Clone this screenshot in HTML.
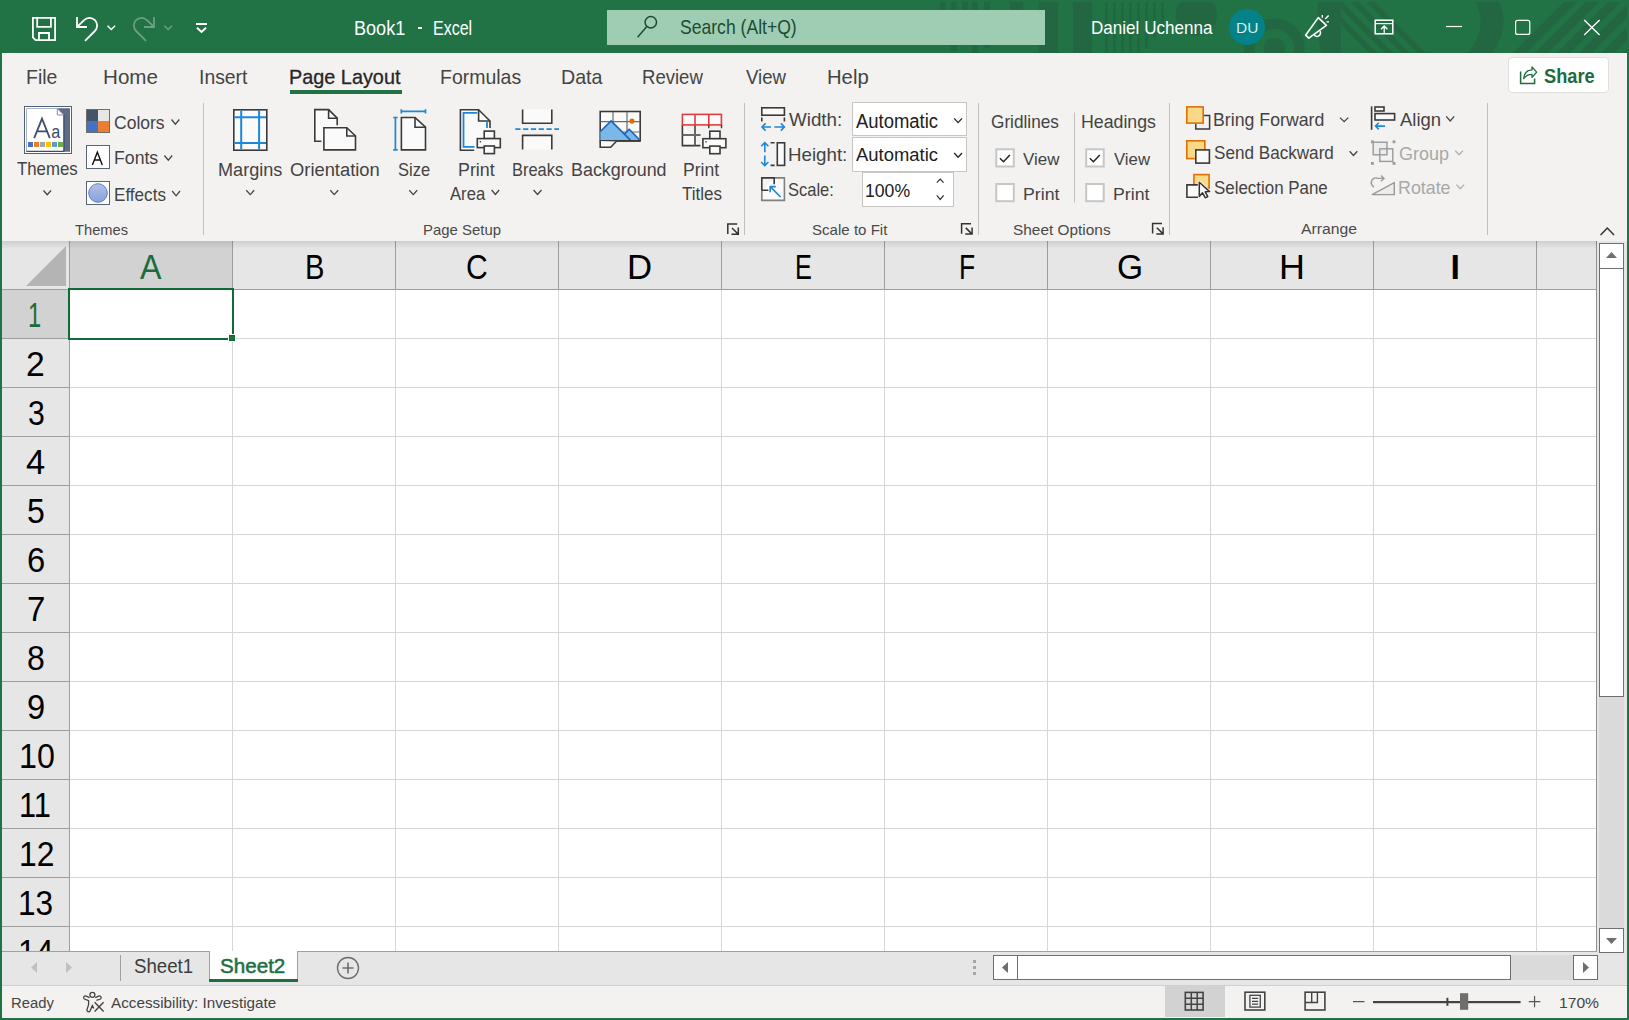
<!DOCTYPE html><html><head><meta charset="utf-8"><style>
html,body{margin:0;padding:0;width:1629px;height:1020px;overflow:hidden;background:#217346}
.t{position:absolute;white-space:pre;font-family:"Liberation Sans",sans-serif;transform-origin:0 0}
.r{position:absolute;box-sizing:content-box}
svg.r{overflow:visible}
</style></head><body>
<div class="r" style="left:0px;top:0px;width:1629px;height:1020px;background:#217346;"></div>
<div class="r" style="left:2px;top:53px;width:1625px;height:188px;background:#f3f2f1;"></div>
<svg class="r" style="left:0;top:0" width="1629" height="53"><defs><clipPath id="tc"><rect x="0" y="2" width="1627" height="51"/></clipPath></defs><g clip-path="url(#tc)" fill="#226741"><rect x="940" y="0" width="5.8" height="30"/><rect x="951" y="0" width="6" height="51.6"/><rect x="962" y="0" width="6" height="30"/><rect x="972.2" y="0" width="5.8" height="53"/><rect x="984.1" y="0" width="6.1" height="47.9"/><rect x="1009.6" y="0" width="13.2" height="30"/><rect x="1038.7" y="0" width="19.4" height="53"/><rect x="1073.1" y="0" width="19" height="53"/><rect x="1105" y="0" width="2.9" height="53"/><rect x="1113.1" y="0" width="2.9" height="53"/><rect x="1121" y="0" width="2.9" height="53"/><rect x="1129" y="0" width="2.9" height="53"/><rect x="1137.1" y="0" width="2.9" height="53"/><rect x="1145.2" y="0" width="2.9" height="49"/><rect x="1153" y="0" width="2.9" height="39"/><rect x="1161" y="0" width="2.9" height="32.7"/><circle cx="1196.3" cy="15.2" r="20.7"/><circle cx="1274.3" cy="48.7" r="25.05" fill="none" stroke="#226741" stroke-width="10.5"/><circle cx="1274.3" cy="48.7" r="10.7"/><path d="M1318 2 H1340.8 V53 H1321 Q1316 26 1318 2 Z"/><clipPath id="sc"><rect x="1340.8" y="0" width="200" height="53"/></clipPath><g clip-path="url(#sc)"><polygon points="1316,0 1324.5,0 1377.5,53 1369,53"/><polygon points="1332,0 1340.5,0 1393.5,53 1385,53"/><polygon points="1348.2,0 1356.7,0 1409.7,53 1401.2,53"/><polygon points="1364.4,0 1372.9,0 1425.9,53 1417.4,53"/></g><path d="M1474 0 Q1490 26 1468 53 L1492 53 Q1512 26 1498 0 Z"/><polygon points="1513,53 1526,53 1577,2 1564,2"/><polygon points="1535,53 1548,53 1599,2 1586,2"/><polygon points="1557,53 1570,53 1621,2 1608,2"/><polygon points="1579,53 1592,53 1643,2 1630,2"/><polygon points="1601,53 1614,53 1665,2 1652,2"/><polygon points="1623,53 1636,53 1687,2 1674,2"/></g></svg>
<svg class="r" style="left:0;top:0" width="1629" height="53" fill="none" stroke-linecap="butt"><path d="M32.9 17.9 H55.1 V40.1 H35.6 L32.9 37.4 Z" stroke="#ffffff" stroke-width="1.8"/><path d="M37.2 17.9 V26.8 H50.9 V17.9" stroke="#ffffff" stroke-width="1.8"/><path d="M39 40.1 V33 H49 V40.1" stroke="#ffffff" stroke-width="1.8"/><path d="M77 17 V27 H87 M77.6 26.4 L84.1 20.2 A7.6 7.6 0 0 1 94.9 31 L85 40.8" stroke="#ffffff" stroke-width="1.8"/><path d="M107.5 25.8 L111.3 29.5 L115.1 25.8" stroke="#ffffff" stroke-width="1.5"/><path d="M77 17 V27 H87 M77.6 26.4 L84.1 20.2 A7.6 7.6 0 0 1 94.9 31 L85 40.8" stroke="rgba(255,255,255,0.33)" stroke-width="1.8" transform="translate(231,0) scale(-1,1)"/><path d="M164.4 25.8 L168.2 29.5 L172 25.8" stroke="rgba(255,255,255,0.33)" stroke-width="1.5"/><rect x="196" y="23" width="11" height="2" fill="#ffffff" stroke="none"/><path d="M197 27.8 L201.5 32 L206 27.8" stroke="#ffffff" stroke-width="2"/><path d="M1305.6 35.2 L1318.3 17.6 L1326.4 25.4 L1308.8 38.1 Z" stroke="#ffffff" stroke-width="1.6" stroke-linejoin="round"/><path d="M1314.1 34.7 A3.4 3.4 0 0 0 1320 31.2" stroke="#ffffff" stroke-width="1.5"/><path d="M1322.3 15.1 V17.8 M1325.2 19 L1328.6 15.5 M1326.5 21.9 H1329" stroke="#ffffff" stroke-width="1.4"/><rect x="1375.2" y="20.2" width="17.6" height="13.6" stroke="#ffffff" stroke-width="1.5"/><path d="M1375 23.6 H1393" stroke="#ffffff" stroke-width="1.2"/><path d="M1384.2 34 V26.2 M1381 29.2 L1384.2 26 L1387.4 29.2" stroke="#ffffff" stroke-width="1.3"/><path d="M1446 26.5 H1462" stroke="#ffffff" stroke-width="1.2"/><rect x="1515.6" y="20.4" width="14.2" height="14" rx="2" stroke="#ffffff" stroke-width="1.2"/><path d="M1584.2 20 L1599.6 35 M1599.6 20 L1584.2 35" stroke="#ffffff" stroke-width="1.3"/></svg>
<div class="t" style="left:354.05px;top:18.53px;font-size:19.33px;line-height:19.33px;color:#ffffff;transform:scaleX(0.9353);">Book1</div>
<div class="r" style="left:417.5px;top:27px;width:4.5px;height:1.6px;background:#fff"></div>
<div class="t" style="left:432.62px;top:18.53px;font-size:19.33px;line-height:19.33px;color:#ffffff;transform:scaleX(0.8281);">Excel</div>
<div class="r" style="left:607px;top:10px;width:438px;height:35px;background:#9fcdb3;"></div>
<svg class="r" style="left:0;top:0" width="1629" height="53" fill="none"><circle cx="650.8" cy="22.2" r="5.7" stroke="#1d4b30" stroke-width="1.5"/><path d="M646.8 26.4 L637.6 37.2" stroke="#1d4b30" stroke-width="1.5"/></svg>
<div class="t" style="left:680.11px;top:17.32px;font-size:20.64px;line-height:20.64px;color:#1d4b30;transform:scaleX(0.8520);">Search (Alt+Q)</div>
<div class="t" style="left:1090.63px;top:18.95px;font-size:18.60px;line-height:18.60px;color:#ffffff;transform:scaleX(0.9185);">Daniel Uchenna</div>
<div class="r" style="left:1229px;top:9px;width:36px;height:36px;border-radius:50%;background:#038387"></div>
<div class="t" style="left:1235.76px;top:20.82px;font-size:14.97px;line-height:14.97px;color:#d6eeee;transform:scaleX(1.0344);">DU</div>
<div class="t" style="left:26.04px;top:66.98px;font-size:20.93px;line-height:20.93px;color:#444444;transform:scaleX(0.9299);">File</div>
<div class="t" style="left:102.75px;top:66.98px;font-size:20.93px;line-height:20.93px;color:#444444;transform:scaleX(0.9856);">Home</div>
<div class="t" style="left:198.76px;top:66.98px;font-size:20.93px;line-height:20.93px;color:#444444;transform:scaleX(0.9258);">Insert</div>
<div class="t" style="left:440.04px;top:66.98px;font-size:20.93px;line-height:20.93px;color:#444444;transform:scaleX(0.9308);">Formulas</div>
<div class="t" style="left:561.03px;top:66.98px;font-size:20.93px;line-height:20.93px;color:#444444;transform:scaleX(0.9391);">Data</div>
<div class="t" style="left:642.01px;top:66.98px;font-size:20.93px;line-height:20.93px;color:#444444;transform:scaleX(0.8869);">Review</div>
<div class="t" style="left:745.70px;top:66.98px;font-size:20.93px;line-height:20.93px;color:#444444;transform:scaleX(0.8911);">View</div>
<div class="t" style="left:826.98px;top:66.98px;font-size:20.93px;line-height:20.93px;color:#444444;transform:scaleX(0.9679);">Help</div>
<div class="t" style="left:289.01px;top:66.98px;font-size:20.93px;line-height:20.93px;color:#262626;transform:scaleX(0.9487);-webkit-text-stroke:0.3px #262626;">Page Layout</div>
<div class="r" style="left:290px;top:90px;width:112px;height:4px;background:#217346;"></div>
<div class="r" style="left:1508px;top:57px;width:99px;height:34px;background:#fff;border:1px solid #e1dfdd;border-radius:4px"></div>
<div class="t" style="left:1544.14px;top:64.96px;font-size:21.08px;line-height:21.08px;color:#1e6b3e;font-weight:bold;transform:scaleX(0.8654);">Share</div>
<div class="t" style="left:17.16px;top:161.06px;font-size:17.88px;line-height:17.88px;color:#434343;transform:scaleX(0.9409);">Themes</div>
<div class="t" style="left:113.72px;top:113.99px;font-size:18.31px;line-height:18.31px;color:#434343;transform:scaleX(0.9577);">Colors</div>
<div class="t" style="left:113.58px;top:150.06px;font-size:17.88px;line-height:17.88px;color:#434343;transform:scaleX(0.9897);">Fonts</div>
<div class="t" style="left:113.63px;top:185.60px;font-size:18.90px;line-height:18.90px;color:#434343;transform:scaleX(0.9047);">Effects</div>
<div class="t" style="left:75.31px;top:222.52px;font-size:14.97px;line-height:14.97px;color:#4a4a4a;transform:scaleX(0.9808);">Themes</div>
<div class="t" style="left:218.45px;top:160.77px;font-size:18.46px;line-height:18.46px;color:#434343;transform:scaleX(0.9811);">Margins</div>
<div class="t" style="left:289.67px;top:160.77px;font-size:18.46px;line-height:18.46px;color:#434343;transform:scaleX(0.9952);">Orientation</div>
<div class="t" style="left:397.56px;top:160.77px;font-size:18.46px;line-height:18.46px;color:#434343;transform:scaleX(0.8941);">Size</div>
<div class="t" style="left:457.57px;top:161.56px;font-size:17.88px;line-height:17.88px;color:#434343;transform:scaleX(0.9969);">Print</div>
<div class="t" style="left:449.50px;top:185.34px;font-size:18.02px;line-height:18.02px;color:#434343;transform:scaleX(0.9234);">Area</div>
<div class="t" style="left:511.58px;top:161.56px;font-size:17.88px;line-height:17.88px;color:#434343;transform:scaleX(0.9207);">Breaks</div>
<div class="t" style="left:571.37px;top:161.56px;font-size:17.88px;line-height:17.88px;color:#434343;transform:scaleX(1.0024);">Background</div>
<div class="t" style="left:683.49px;top:161.56px;font-size:17.88px;line-height:17.88px;color:#434343;transform:scaleX(0.9856);">Print</div>
<div class="t" style="left:681.86px;top:185.34px;font-size:18.02px;line-height:18.02px;color:#434343;transform:scaleX(0.9453);">Titles</div>
<div class="t" style="left:422.71px;top:222.03px;font-size:15.55px;line-height:15.55px;color:#4a4a4a;transform:scaleX(0.9598);">Page Setup</div>
<div class="t" style="left:789.20px;top:111.02px;font-size:18.75px;line-height:18.75px;color:#434343;transform:scaleX(1.0026);">Width:</div>
<div class="t" style="left:787.50px;top:145.65px;font-size:18.60px;line-height:18.60px;color:#434343;transform:scaleX(1.0069);">Height:</div>
<div class="t" style="left:788.26px;top:180.99px;font-size:18.31px;line-height:18.31px;color:#434343;transform:scaleX(0.9021);">Scale:</div>
<div class="r" style="left:852px;top:102px;width:113px;height:32px;background:#fff;border:1px solid #c8c6c4"></div>
<div class="r" style="left:852px;top:137px;width:113px;height:33px;background:#fff;border:1px solid #c8c6c4"></div>
<div class="r" style="left:862px;top:172px;width:90px;height:33px;background:#fff;border:1px solid #c8c6c4"></div>
<div class="t" style="left:855.80px;top:111.63px;font-size:19.33px;line-height:19.33px;color:#202020;transform:scaleX(0.9538);">Automatic</div>
<div class="t" style="left:855.80px;top:146.30px;font-size:18.90px;line-height:18.90px;color:#202020;transform:scaleX(0.9758);">Automatic</div>
<div class="t" style="left:864.78px;top:181.70px;font-size:18.90px;line-height:18.90px;color:#202020;transform:scaleX(0.9332);">100%</div>
<div class="t" style="left:811.82px;top:222.82px;font-size:14.97px;line-height:14.97px;color:#4a4a4a;transform:scaleX(1.0070);">Scale to Fit</div>
<div class="t" style="left:990.64px;top:114.06px;font-size:17.88px;line-height:17.88px;color:#434343;transform:scaleX(0.9636);">Gridlines</div>
<div class="t" style="left:1080.58px;top:114.06px;font-size:17.88px;line-height:17.88px;color:#434343;transform:scaleX(0.9935);">Headings</div>
<div class="t" style="left:1023.30px;top:150.80px;font-size:17.01px;line-height:17.01px;color:#434343;transform:scaleX(0.9983);">View</div>
<div class="t" style="left:1022.58px;top:185.80px;font-size:17.01px;line-height:17.01px;color:#434343;transform:scaleX(1.0421);">Print</div>
<div class="t" style="left:1113.60px;top:150.80px;font-size:17.01px;line-height:17.01px;color:#434343;transform:scaleX(0.9846);">View</div>
<div class="t" style="left:1112.58px;top:185.80px;font-size:17.01px;line-height:17.01px;color:#434343;transform:scaleX(1.0421);">Print</div>
<div class="t" style="left:1013.11px;top:222.52px;font-size:14.97px;line-height:14.97px;color:#4a4a4a;transform:scaleX(1.0286);">Sheet Options</div>
<div class="t" style="left:1213.38px;top:110.75px;font-size:18.60px;line-height:18.60px;color:#434343;transform:scaleX(0.9533);">Bring Forward</div>
<div class="t" style="left:1214.03px;top:144.40px;font-size:18.90px;line-height:18.90px;color:#434343;transform:scaleX(0.9058);">Send Backward</div>
<div class="t" style="left:1214.04px;top:178.70px;font-size:18.90px;line-height:18.90px;color:#434343;transform:scaleX(0.8951);">Selection Pane</div>
<div class="t" style="left:1399.60px;top:110.95px;font-size:18.60px;line-height:18.60px;color:#434343;transform:scaleX(0.9931);">Align</div>
<div class="t" style="left:1398.70px;top:144.84px;font-size:18.02px;line-height:18.02px;color:#a8a8a8;transform:scaleX(0.9983);">Group</div>
<div class="t" style="left:1398.17px;top:179.24px;font-size:18.02px;line-height:18.02px;color:#a8a8a8;transform:scaleX(0.9899);">Rotate</div>
<div class="t" style="left:1300.60px;top:223.39px;font-size:13.95px;line-height:13.95px;color:#4a4a4a;transform:scaleX(1.1275);">Arrange</div>
<svg class="r" style="left:0;top:0" width="1629" height="1020" fill="none"><rect x="24.5" y="106.5" width="47" height="47" fill="#fff" stroke="#52607a" stroke-width="1"/><polygon points="26.5,108.5 57.3,108.5 63.7,114.8 63.7,151.5 26.5,151.5" fill="#fff" stroke="#a9b4c8" stroke-width="1"/><polygon points="57.3,108.2 70,108.2 70,151.7 63.7,151.7 63.7,114.6" fill="#5d6b86"/><path d="M26.5 151.3 H64 V114.6" stroke="#3e4d6a" stroke-width="1.2"/><polygon points="57.3,108.5 57.3,115 63.7,115" fill="#fff" stroke="#6b7891" stroke-width="0.8"/><path d="M34.2 138.2 L42 118.6 L49.8 138.2 M36.7 131.4 H47.3" stroke="#3e4d6a" stroke-width="1.8"/><text x="51.2" y="138" font-family="Liberation Sans" font-size="18" fill="#3e4d6a" textLength="9" lengthAdjust="spacingAndGlyphs">a</text><rect x="28" y="142" width="5" height="5" fill="#4472c4"/><rect x="34" y="142" width="5" height="5" fill="#ed7d31"/><rect x="40" y="142" width="5" height="5" fill="#a5a5a5"/><rect x="46" y="142" width="5" height="5" fill="#ffc000"/><rect x="52" y="142" width="5" height="5" fill="#5b9bd5"/><rect x="58" y="142" width="5" height="5" fill="#70ad47"/><path d="M43.5 190.5 L47.25 194.8 L51 190.5" stroke="#444" stroke-width="1.3" fill="none"/><rect x="86.5" y="109.5" width="23" height="23" stroke="#6d6d6d" stroke-width="1"/><rect x="87" y="110" width="11" height="11" fill="#44546a"/><rect x="98" y="110" width="11" height="11" fill="#e7e6e6"/><rect x="87" y="121" width="11" height="11" fill="#4472c4"/><rect x="98" y="121" width="11" height="11" fill="#ed7d31"/><path d="M171.5 119.5 L175.4 124.2 L179.3 119.5" stroke="#444" stroke-width="1.3" fill="none"/><rect x="86.5" y="145.5" width="23" height="23" fill="#fff" stroke="#5a6478" stroke-width="1"/><path d="M92.4 164.9 L97.35 152.2 L102.3 164.9 M94.3 160 H100.4" stroke="#111" stroke-width="1.4"/><path d="M164.4 155.5 L168.3 160.2 L172.2 155.5" stroke="#444" stroke-width="1.3" fill="none"/><defs><linearGradient id="eg" x1="0" y1="0" x2="0" y2="1"><stop offset="0" stop-color="#b3c0e8"/><stop offset="1" stop-color="#8aa1db"/></linearGradient></defs><rect x="86.5" y="181.5" width="23" height="23" fill="#fff" stroke="#5a6478" stroke-width="1"/><circle cx="98" cy="193" r="9.3" fill="url(#eg)" stroke="#5a80cc" stroke-width="1"/><path d="M172.2 191 L176.1 195.8 L180 191" stroke="#444" stroke-width="1.3" fill="none"/><path d="M203.5 103 V235" stroke="#c1bfbd" stroke-width="1"/><path d="M744.5 103 V235" stroke="#c1bfbd" stroke-width="1"/><path d="M978.5 103 V235" stroke="#c1bfbd" stroke-width="1"/><path d="M1169.5 103 V235" stroke="#c1bfbd" stroke-width="1"/><path d="M1487.5 103 V235" stroke="#c1bfbd" stroke-width="1"/><path d="M1074.5 112.5 V202.5" stroke="#c1bfbd" stroke-width="1"/><rect x="233.8" y="109.8" width="33" height="40.4" fill="#fafafa" stroke="#3a3a3a" stroke-width="1.6"/><path d="M241.2 110.5 V149.5 M259.1 110.5 V149.5 M234.5 117.2 H266 M234.5 142.9 H266" stroke="#1e88d6" stroke-width="2"/><path d="M246.3 190.3 L250.25 194.6 L254.2 190.3" stroke="#444" stroke-width="1.3" fill="none"/><path d="M321.3 141.3 H314.8 V109.6 H328.6 L337.2 118.2 V125.3" fill="#fafafa" stroke="#3a3a3a" stroke-width="1.6"/><path d="M328.6 109.6 V118.2 H337.2" stroke="#3a3a3a" stroke-width="1.6"/><path d="M323.9 127.7 H346.8 L355.5 136 V149.9 H323.9 Z" fill="#fafafa" stroke="#3a3a3a" stroke-width="1.6"/><path d="M346.8 127.7 V136 H355.5" stroke="#3a3a3a" stroke-width="1.6"/><path d="M330.3 190.3 L334.25 194.6 L338.2 190.3" stroke="#444" stroke-width="1.3" fill="none"/><path d="M401.3 111.3 H425.5 M401.3 109.2 V113.4 M425.5 109.2 V113.4" stroke="#1e88d6" stroke-width="1.7"/><path d="M395.4 117.5 V149.8 M393.2 117.5 H397.7 M393.2 149.8 H397.7" stroke="#1e88d6" stroke-width="1.7"/><path d="M401.4 117.5 H415 L425.5 127.2 V149.9 H401.4 Z" fill="#fafafa" stroke="#3a3a3a" stroke-width="1.6"/><path d="M415 117.5 V127.2 H425.5" stroke="#3a3a3a" stroke-width="1.6"/><path d="M409.3 190.3 L413.25 194.6 L417.2 190.3" stroke="#444" stroke-width="1.3" fill="none"/><path d="M474.2 150.2 H460.4 V109.8 H478.6 L490 121 V128" fill="#fafafa" stroke="#3a3a3a" stroke-width="1.6"/><path d="M478.6 109.8 V121 H490" stroke="#3a3a3a" stroke-width="1.6"/><path d="M477.3 112.9 H463.5 V146.8 H474.6 M487 121.5 V128" stroke="#1e88d6" stroke-width="1.8"/><rect x="484.2" y="131.1" width="10.2" height="7.5" fill="#fafafa" stroke="#3a3a3a" stroke-width="1.6"/><rect x="477.3" y="138.6" width="23" height="9" fill="#fafafa" stroke="#3a3a3a" stroke-width="1.6"/><rect x="484.2" y="146.0" width="10.2" height="7.6" fill="#fafafa" stroke="#3a3a3a" stroke-width="1.6"/><rect x="479.7" y="141.0" width="1.4" height="1.4" fill="#3a3a3a"/><path d="M491.6 190 L495.4 194.5 L499.2 190" stroke="#444" stroke-width="1.3" fill="none"/><path d="M522.6 109.4 V123.3 H551.8 V109.4" fill="#fafafa" stroke="#3a3a3a" stroke-width="1.6"/><path d="M522.6 149.6 V135.4 H551.8 V149.6" fill="#fafafa" stroke="#3a3a3a" stroke-width="1.6"/><path d="M515.3 129.1 H559" stroke="#1e88d6" stroke-width="1.8" stroke-dasharray="5.2 2.6"/><path d="M533.5 190 L537.5 194.5 L541.5 190" stroke="#444" stroke-width="1.3" fill="none"/><rect x="600.2" y="111.5" width="40" height="29.4" fill="#fafafa" stroke="#3a3a3a" stroke-width="1.6"/><path d="M613 112 V140 M627 112 V140 M600.5 121.7 H640 M600.5 132 H640" stroke="#6b6b6b" stroke-width="1.2"/><path d="M600.4 131.5 L611.1 120.9 L630.6 140.4 L600.4 140.4 Z" fill="#7ab8e8"/><path d="M624.6 135.3 L629.1 128.3 L640 139.3 L640 140.4 L630.6 140.4 Z" fill="#7ab8e8"/><path d="M600.4 131.5 L611.1 120.9 L630.6 140.4 M624.1 134.6 L629.1 129.3 L640 140.2" stroke="#1767c0" stroke-width="1.6" stroke-linejoin="round"/><path d="M600.2 140.9 H640.2" stroke="#3a3a3a" stroke-width="1.6"/><circle cx="632" cy="121.1" r="2.6" fill="#e07000"/><path d="M600.2 141 V147.3 H610.7 L616.2 141.5" fill="#fafafa" stroke="#3a3a3a" stroke-width="1.6"/><path d="M682.4 124.9 V145.6 H700.4 M695 125 V145.6 M682.4 135 H700.4" stroke="#3a3a3a" stroke-width="1.6" fill="#fafafa"/><path d="M695 125 V145.6 M682.4 135 H700.4" stroke="#6b6b6b" stroke-width="1.4"/><rect x="682.4" y="114.4" width="39" height="10.5" fill="#fafafa" stroke="#e03c3c" stroke-width="1.6"/><path d="M695 114.4 V125 M708.8 114.4 V125" stroke="#e03c3c" stroke-width="1.6"/><path d="M708.8 125 V128.2 M721.5 125 V128.2" stroke="#3a3a3a" stroke-width="1.4"/><rect x="709.8" y="131.2" width="10.2" height="7.5" fill="#fafafa" stroke="#3a3a3a" stroke-width="1.6"/><rect x="702.9" y="138.7" width="23" height="9" fill="#fafafa" stroke="#3a3a3a" stroke-width="1.6"/><rect x="709.8" y="146.1" width="10.2" height="7.6" fill="#fafafa" stroke="#3a3a3a" stroke-width="1.6"/><rect x="705.3" y="141.1" width="1.4" height="1.4" fill="#3a3a3a"/><path d="M727.8 233.9 V223.9 H737.1999999999999" stroke="#333" stroke-width="1.5" fill="none"/><path d="M732.0 228.0 L738.3 234.20000000000002 M738.3 227.5 V234.20000000000002 H731.5" stroke="#333" stroke-width="1.5" fill="none"/><path d="M961.6 233.8 V223.8 H971.0" stroke="#333" stroke-width="1.5" fill="none"/><path d="M965.8000000000001 227.9 L972.1 234.10000000000002 M972.1 227.4 V234.10000000000002 H965.3000000000001" stroke="#333" stroke-width="1.5" fill="none"/><path d="M1152.6 233.6 V223.6 H1162.0" stroke="#333" stroke-width="1.5" fill="none"/><path d="M1156.8 227.7 L1163.1 233.9 M1163.1 227.2 V233.9 H1156.3" stroke="#333" stroke-width="1.5" fill="none"/><rect x="761.8" y="107.8" width="22.6" height="7.4" fill="#fafafa" stroke="#3a3a3a" stroke-width="1.6"/><path d="M761.8 117.5 V121.5 M784.4 117.5 V121.5" stroke="#3a3a3a" stroke-width="1.6"/><path d="M762 127 H771 M765.6 123.4 L762 127 L765.6 130.6 M774.4 127 H784.4 M780.8 123.4 L784.4 127 L780.8 130.6" stroke="#1e88d6" stroke-width="1.6"/><rect x="777.3" y="142.8" width="7.3" height="22.6" fill="#fafafa" stroke="#3a3a3a" stroke-width="1.6"/><path d="M770.6 142.8 H774.6 M770.6 165.4 H774.6" stroke="#3a3a3a" stroke-width="1.6"/><path d="M764.8 142.6 V152.2 M761.2 146.2 L764.8 142.6 L768.4 146.2 M764.8 155.6 V165.6 M761.2 162 L764.8 165.6 L768.4 162" stroke="#1e88d6" stroke-width="1.6"/><path d="M774.2 177.9 H784.4 V200.4 H761.8 V190.2" fill="#fafafa" stroke="#808080" stroke-width="1.6"/><path d="M761.8 190.2 V177.9 H774.2 V184.2 M761.8 190.2 H768.4" stroke="#3a3a3a" stroke-width="1.6"/><path d="M780.6 197 L770.2 186.6 M770.2 192.2 V186.6 H775.8" stroke="#1e88d6" stroke-width="1.7"/><path d="M954.2 118.4 L958.1 122.6 L962 118.4" stroke="#222" stroke-width="1.3" fill="none"/><path d="M954.2 153 L958.1 157.2 L962 153" stroke="#222" stroke-width="1.3" fill="none"/><path d="M936.8 182.6 L940.2 179 L943.6 182.6" stroke="#333" stroke-width="1.2" fill="none"/><path d="M936.8 195.4 L940.2 199.5 L943.6 195.4" stroke="#333" stroke-width="1.2" fill="none"/><rect x="996.3" y="149.3" width="17.5" height="17.2" fill="#fff" stroke="#c6c6c6" stroke-width="2"/><rect x="996.3" y="184" width="17.5" height="17.2" fill="#fff" stroke="#c6c6c6" stroke-width="2"/><path d="M999.9 158.3 L1003.5 161.70000000000002 L1009.9 154.9" stroke="#222" stroke-width="1.5"/><rect x="1086.2" y="149.3" width="17.5" height="17.2" fill="#fff" stroke="#c6c6c6" stroke-width="2"/><rect x="1086.2" y="184" width="17.5" height="17.2" fill="#fff" stroke="#c6c6c6" stroke-width="2"/><path d="M1089.8 158.3 L1093.4 161.70000000000002 L1099.8 154.9" stroke="#222" stroke-width="1.5"/><path d="M1203.9 115.6 H1209.6 V129 H1195.8 V123.6" stroke="#3a3a3a" stroke-width="1.5"/><rect x="1186.8" y="106.9" width="16.4" height="16.2" fill="#f8d98a" stroke="#e07000" stroke-width="1.6"/><path d="M1340 117.6 L1344.15 121.6 L1348.3 117.6" stroke="#444" stroke-width="1.3" fill="none"/><rect x="1186.8" y="140.8" width="18" height="17.8" fill="#f8d98a" stroke="#e07000" stroke-width="1.6"/><rect x="1195.8" y="149.9" width="13.6" height="13.2" fill="#fafafa" stroke="#3a3a3a" stroke-width="1.6"/><path d="M1349.6 151.3 L1353.4499999999998 155.5 L1357.3 151.3" stroke="#444" stroke-width="1.3" fill="none"/><rect x="1193.9" y="174.6" width="15.2" height="13.6" fill="#f8d98a" stroke="#e07000" stroke-width="1.6"/><path d="M1186.9 184.9 H1198.5 V197.2 H1186.9 Z" fill="#fafafa"/><path d="M1198 184.9 H1186.9 V197.2 H1198" stroke="#3a3a3a" stroke-width="1.6"/><path d="M1199.3 182.2 L1199.3 196.6 L1202.5 192.8 L1205.4 197.8 L1207.8 196.6 L1205.2 191.8 L1209.6 191.6 Z" fill="#fafafa" stroke="#fafafa" stroke-width="3" stroke-linejoin="round"/><path d="M1199.3 182.2 L1199.3 196.6 L1202.5 192.8 L1205.4 197.8 L1207.8 196.6 L1205.2 191.8 L1209.6 191.6 Z" fill="#fafafa" stroke="#333" stroke-width="1.5" stroke-linejoin="round"/><path d="M1371.6 106.3 V129.8" stroke="#3a3a3a" stroke-width="1.6"/><rect x="1375" y="107" width="9" height="4" fill="#fafafa" stroke="#3a3a3a" stroke-width="1.6"/><rect x="1375" y="113.6" width="19.6" height="6.4" fill="#fafafa" stroke="#3a3a3a" stroke-width="1.6"/><path d="M1375.5 126.1 H1385 M1378.8 122.8 L1375.5 126.1 L1378.8 129.4" stroke="#1e88d6" stroke-width="1.6"/><path d="M1446.2 116.4 L1450.2 121 L1454.2 116.4" stroke="#444" stroke-width="1.3" fill="none"/><rect x="1371" y="140.4" width="2.8" height="2.8" fill="#9a9a9a"/><rect x="1392.6" y="140.4" width="2.8" height="2.8" fill="#9a9a9a"/><rect x="1371" y="162" width="2.8" height="2.8" fill="#9a9a9a"/><rect x="1392.6" y="162" width="2.8" height="2.8" fill="#9a9a9a"/><rect x="1373.2" y="142.2" width="13.8" height="12.6" fill="#ececec" stroke="#9a9a9a" stroke-width="1.4"/><rect x="1379.8" y="148.8" width="13" height="12.6" fill="none" stroke="#9a9a9a" stroke-width="1.4"/><path d="M1455.3 150.8 L1459.1 154.8 L1462.9 150.8" stroke="#b0b0b0" stroke-width="1.3" fill="none"/><path d="M1372 194.6 L1394.3 182.6 V194.6 Z" fill="#ececec" stroke="#9a9a9a" stroke-width="1.4"/><path d="M1374 187 A4.5 4.5 0 0 1 1378 178.4 H1384 M1381 175.6 L1384 178.4 L1381 181.2" stroke="#9a9a9a" stroke-width="1.4"/><path d="M1456.4 184.6 L1460.25 188.8 L1464.1 184.6" stroke="#b0b0b0" stroke-width="1.3" fill="none"/><path d="M1600.6 235 L1607.3 228 L1614 235" stroke="#333" stroke-width="1.5"/><path d="M1520.6 71.5 V83.6 H1534.6 V78.5" stroke="#1e6b3e" stroke-width="1.5"/><path d="M1523.6 78.6 Q1524.6 70 1532 69.8 V66.8 L1536.6 72.2 L1532 77.4 V74.4 Q1527.4 74.2 1523.6 78.6 Z" stroke="#1e6b3e" stroke-width="1.3" stroke-linejoin="round"/></svg>
<div class="r" style="left:2px;top:241px;width:1595px;height:48px;background:#e6e6e6;"></div>
<div class="r" style="left:70px;top:241px;width:162px;height:48px;background:#d2d2d2;"></div>
<svg class="r" style="left:2px;top:241px" width="67" height="48"><polygon points="64,5 64,45 24,45" fill="#b4b4b4"/></svg>
<div class="r" style="left:2px;top:290px;width:67px;height:661px;background:#e6e6e6;"></div>
<div class="r" style="left:2px;top:290px;width:67px;height:48px;background:#d2d2d2;"></div>
<div class="r" style="left:70px;top:290px;width:1526px;height:661px;background:#ffffff;"></div>
<div class="r" style="left:69px;top:241px;width:1px;height:48px;background:#9e9e9e;"></div>
<div class="r" style="left:232px;top:241px;width:1px;height:48px;background:#9e9e9e;"></div>
<div class="r" style="left:232px;top:290px;width:1px;height:661px;background:#d6d6d6;"></div>
<div class="r" style="left:395px;top:241px;width:1px;height:48px;background:#9e9e9e;"></div>
<div class="r" style="left:395px;top:290px;width:1px;height:661px;background:#d6d6d6;"></div>
<div class="r" style="left:558px;top:241px;width:1px;height:48px;background:#9e9e9e;"></div>
<div class="r" style="left:558px;top:290px;width:1px;height:661px;background:#d6d6d6;"></div>
<div class="r" style="left:721px;top:241px;width:1px;height:48px;background:#9e9e9e;"></div>
<div class="r" style="left:721px;top:290px;width:1px;height:661px;background:#d6d6d6;"></div>
<div class="r" style="left:884px;top:241px;width:1px;height:48px;background:#9e9e9e;"></div>
<div class="r" style="left:884px;top:290px;width:1px;height:661px;background:#d6d6d6;"></div>
<div class="r" style="left:1047px;top:241px;width:1px;height:48px;background:#9e9e9e;"></div>
<div class="r" style="left:1047px;top:290px;width:1px;height:661px;background:#d6d6d6;"></div>
<div class="r" style="left:1210px;top:241px;width:1px;height:48px;background:#9e9e9e;"></div>
<div class="r" style="left:1210px;top:290px;width:1px;height:661px;background:#d6d6d6;"></div>
<div class="r" style="left:1373px;top:241px;width:1px;height:48px;background:#9e9e9e;"></div>
<div class="r" style="left:1373px;top:290px;width:1px;height:661px;background:#d6d6d6;"></div>
<div class="r" style="left:1536px;top:241px;width:1px;height:48px;background:#9e9e9e;"></div>
<div class="r" style="left:1536px;top:290px;width:1px;height:661px;background:#d6d6d6;"></div>
<div class="r" style="left:2px;top:289px;width:1595px;height:1px;background:#9e9e9e;"></div>
<div class="r" style="left:2px;top:338px;width:67px;height:1px;background:#9e9e9e;"></div>
<div class="r" style="left:70px;top:338px;width:1526px;height:1px;background:#d6d6d6;"></div>
<div class="r" style="left:2px;top:387px;width:67px;height:1px;background:#9e9e9e;"></div>
<div class="r" style="left:70px;top:387px;width:1526px;height:1px;background:#d6d6d6;"></div>
<div class="r" style="left:2px;top:436px;width:67px;height:1px;background:#9e9e9e;"></div>
<div class="r" style="left:70px;top:436px;width:1526px;height:1px;background:#d6d6d6;"></div>
<div class="r" style="left:2px;top:485px;width:67px;height:1px;background:#9e9e9e;"></div>
<div class="r" style="left:70px;top:485px;width:1526px;height:1px;background:#d6d6d6;"></div>
<div class="r" style="left:2px;top:534px;width:67px;height:1px;background:#9e9e9e;"></div>
<div class="r" style="left:70px;top:534px;width:1526px;height:1px;background:#d6d6d6;"></div>
<div class="r" style="left:2px;top:583px;width:67px;height:1px;background:#9e9e9e;"></div>
<div class="r" style="left:70px;top:583px;width:1526px;height:1px;background:#d6d6d6;"></div>
<div class="r" style="left:2px;top:632px;width:67px;height:1px;background:#9e9e9e;"></div>
<div class="r" style="left:70px;top:632px;width:1526px;height:1px;background:#d6d6d6;"></div>
<div class="r" style="left:2px;top:681px;width:67px;height:1px;background:#9e9e9e;"></div>
<div class="r" style="left:70px;top:681px;width:1526px;height:1px;background:#d6d6d6;"></div>
<div class="r" style="left:2px;top:730px;width:67px;height:1px;background:#9e9e9e;"></div>
<div class="r" style="left:70px;top:730px;width:1526px;height:1px;background:#d6d6d6;"></div>
<div class="r" style="left:2px;top:779px;width:67px;height:1px;background:#9e9e9e;"></div>
<div class="r" style="left:70px;top:779px;width:1526px;height:1px;background:#d6d6d6;"></div>
<div class="r" style="left:2px;top:828px;width:67px;height:1px;background:#9e9e9e;"></div>
<div class="r" style="left:70px;top:828px;width:1526px;height:1px;background:#d6d6d6;"></div>
<div class="r" style="left:2px;top:877px;width:67px;height:1px;background:#9e9e9e;"></div>
<div class="r" style="left:70px;top:877px;width:1526px;height:1px;background:#d6d6d6;"></div>
<div class="r" style="left:2px;top:926px;width:67px;height:1px;background:#9e9e9e;"></div>
<div class="r" style="left:70px;top:926px;width:1526px;height:1px;background:#d6d6d6;"></div>
<div class="r" style="left:69px;top:290px;width:1px;height:661px;background:#9e9e9e;"></div>
<div class="r" style="left:1596px;top:241px;width:1px;height:710px;background:#8f8f8f;"></div>
<div class="r" style="left:2px;top:241px;width:1625px;height:8px;background:transparent;background:linear-gradient(to bottom, rgba(0,0,0,0.10), rgba(0,0,0,0))"></div>
<div class="t" style="left:140.30px;top:249.24px;font-size:35.03px;line-height:35.03px;color:#1b6b3c;transform:scaleX(0.9187);">A</div>
<div class="t" style="left:305.07px;top:249.24px;font-size:35.03px;line-height:35.03px;color:#000000;transform:scaleX(0.8324);">B</div>
<div class="t" style="left:466.30px;top:249.24px;font-size:35.03px;line-height:35.03px;color:#000000;transform:scaleX(0.8587);">C</div>
<div class="t" style="left:627.22px;top:249.24px;font-size:35.03px;line-height:35.03px;color:#000000;transform:scaleX(0.9932);">D</div>
<div class="t" style="left:795.17px;top:249.24px;font-size:35.03px;line-height:35.03px;color:#000000;transform:scaleX(0.7229);">E</div>
<div class="t" style="left:958.78px;top:249.24px;font-size:35.03px;line-height:35.03px;color:#000000;transform:scaleX(0.7555);">F</div>
<div class="t" style="left:1116.72px;top:249.24px;font-size:35.03px;line-height:35.03px;color:#000000;transform:scaleX(0.9589);">G</div>
<div class="t" style="left:1278.83px;top:249.24px;font-size:35.03px;line-height:35.03px;color:#000000;transform:scaleX(1.0257);">H</div>
<div class="t" style="left:1447.82px;top:249.24px;font-size:35.03px;line-height:35.03px;color:#000000;transform:scaleX(1.4845);">I</div>
<div class="t" style="left:27.82px;top:297.87px;font-size:35.47px;line-height:35.47px;color:#1b6b3c;transform:scaleX(0.6676);">1</div>
<div class="t" style="left:26.42px;top:346.87px;font-size:35.47px;line-height:35.47px;color:#000000;transform:scaleX(0.9501);">2</div>
<div class="t" style="left:27.64px;top:395.87px;font-size:35.47px;line-height:35.47px;color:#000000;transform:scaleX(0.8518);">3</div>
<div class="t" style="left:26.21px;top:444.87px;font-size:35.47px;line-height:35.47px;color:#000000;transform:scaleX(0.9731);">4</div>
<div class="t" style="left:27.02px;top:493.87px;font-size:35.47px;line-height:35.47px;color:#000000;transform:scaleX(0.9023);">5</div>
<div class="t" style="left:26.67px;top:542.87px;font-size:35.47px;line-height:35.47px;color:#000000;transform:scaleX(0.9217);">6</div>
<div class="t" style="left:26.65px;top:591.87px;font-size:35.47px;line-height:35.47px;color:#000000;transform:scaleX(0.9317);">7</div>
<div class="t" style="left:27.02px;top:640.87px;font-size:35.47px;line-height:35.47px;color:#000000;transform:scaleX(0.9023);">8</div>
<div class="t" style="left:26.83px;top:689.87px;font-size:35.47px;line-height:35.47px;color:#000000;transform:scaleX(0.9217);">9</div>
<div class="t" style="left:18.59px;top:738.87px;font-size:35.47px;line-height:35.47px;color:#000000;transform:scaleX(0.9079);">10</div>
<div class="t" style="left:18.70px;top:787.87px;font-size:35.47px;line-height:35.47px;color:#000000;transform:scaleX(0.8659);">11</div>
<div class="t" style="left:18.61px;top:836.87px;font-size:35.47px;line-height:35.47px;color:#000000;transform:scaleX(0.8972);">12</div>
<div class="t" style="left:18.03px;top:885.87px;font-size:35.47px;line-height:35.47px;color:#000000;transform:scaleX(0.8898);">13</div>
<div class="t" style="left:18.19px;top:934.87px;font-size:35.47px;line-height:35.47px;color:#000000;transform:scaleX(0.9045);">14</div>
<div class="r" style="left:68px;top:288px;width:162px;height:48px;border:2px solid #0f6b36"></div>
<div class="r" style="left:229px;top:335px;width:6px;height:6px;background:#217346;box-shadow:0 0 0 1px #fff;outline:1px solid #0f6b36;outline-offset:-1px"></div>
<div class="r" style="left:1597px;top:241px;width:30px;height:710px;background:#e6e6e6;"></div>
<div class="r" style="left:1599px;top:243px;width:25px;height:708px;background:#dadada;"></div>
<div class="r" style="left:1599px;top:243px;width:23px;height:24px;background:#fff;border:1px solid #6e6e6e"></div>
<svg class="r" style="left:1599px;top:243px" width="25" height="26"><polygon points="7,15 18,15 12.5,9" fill="#6e6e6e"/></svg>
<div class="r" style="left:1599px;top:268px;width:23px;height:427px;background:#fff;border:1px solid #6e6e6e"></div>
<div class="r" style="left:1599px;top:928px;width:23px;height:23px;background:#fff;border:1px solid #6e6e6e"></div>
<svg class="r" style="left:1599px;top:928px" width="25" height="25"><polygon points="7,10 18,10 12.5,16" fill="#6e6e6e"/></svg>
<div class="r" style="left:2px;top:951px;width:1625px;height:35px;background:#e6e6e6;"></div>
<div class="r" style="left:2px;top:951px;width:1595px;height:1px;background:#a0a0a0;"></div>
<div class="r" style="left:2px;top:985px;width:1625px;height:1px;background:#d0d0d0;"></div>
<div class="r" style="left:1599px;top:928px;width:23px;height:23px;background:#fff;border:1px solid #6e6e6e"></div>
<svg class="r" style="left:1599px;top:928px" width="25" height="25"><polygon points="7,10 18,10 12.5,16" fill="#6e6e6e"/></svg>
<svg class="r" style="left:28px;top:960px" width="50" height="16"><polygon points="9,2 9,13 3,7.5" fill="#c0c0c0"/><polygon points="38,2 38,13 44,7.5" fill="#c0c0c0"/></svg>
<div class="r" style="left:120px;top:955px;width:1px;height:26px;background:#a0a0a0;"></div>
<div class="t" style="left:133.66px;top:956.64px;font-size:19.91px;line-height:19.91px;color:#3c3c3c;transform:scaleX(0.9375);">Sheet1</div>
<div class="r" style="left:209px;top:951px;width:87px;height:31px;background:#fff;border-left:1px solid #a0a0a0;border-right:1px solid #a0a0a0"></div>
<div class="r" style="left:209px;top:979px;width:89px;height:3px;background:#1e6e40;"></div>
<div class="t" style="left:220.47px;top:956.64px;font-size:19.91px;line-height:19.91px;color:#1e6e40;transform:scaleX(1.0354);-webkit-text-stroke:0.5px #1e6e40;">Sheet2</div>
<svg class="r" style="left:336px;top:956px" width="24" height="24"><circle cx="12" cy="12" r="10.5" fill="none" stroke="#6e6e6e" stroke-width="1.4"/><path d="M12 6.5V17.5M6.5 12H17.5" stroke="#6e6e6e" stroke-width="1.6"/></svg>
<div class="r" style="left:973px;top:960px;width:3px;height:3px;background:#a6a6a6;"></div>
<div class="r" style="left:973px;top:966px;width:3px;height:3px;background:#a6a6a6;"></div>
<div class="r" style="left:973px;top:972px;width:3px;height:3px;background:#a6a6a6;"></div>
<div class="r" style="left:993px;top:955px;width:605px;height:25px;background:#dadada;"></div>
<div class="r" style="left:993px;top:955px;width:23px;height:23px;background:#fff;border:1px solid #6e6e6e"></div>
<svg class="r" style="left:993px;top:955px" width="25" height="25"><polygon points="15,7 15,18 9,12.5" fill="#6e6e6e"/></svg>
<div class="r" style="left:1017px;top:955px;width:492px;height:23px;background:#fff;border:1px solid #6e6e6e"></div>
<div class="r" style="left:1573px;top:955px;width:23px;height:23px;background:#fff;border:1px solid #6e6e6e"></div>
<svg class="r" style="left:1573px;top:955px" width="25" height="25"><polygon points="10,7 10,18 16,12.5" fill="#6e6e6e"/></svg>
<div class="r" style="left:2px;top:986px;width:1625px;height:32px;background:#f3f2f1;"></div>
<div class="t" style="left:11.42px;top:995.65px;font-size:14.83px;line-height:14.83px;color:#444444;transform:scaleX(0.9986);">Ready</div>
<div class="t" style="left:110.80px;top:996.02px;font-size:14.97px;line-height:14.97px;color:#444444;transform:scaleX(1.0185);">Accessibility: Investigate</div>
<div class="r" style="left:1165px;top:986px;width:60px;height:31px;background:#d2d2d2;"></div>
<div class="t" style="left:1559.43px;top:995.23px;font-size:15.55px;line-height:15.55px;color:#444444;transform:scaleX(1.0052);">170%</div>
<svg class="r" style="left:0;top:0" width="1629" height="1020" fill="none"><circle cx="92.4" cy="994.8" r="2.5" stroke="#444" stroke-width="1.3"/><path d="M89.6 997.6 L85.6 995.9 A1.7 1.7 0 0 0 84.4 999 L88.6 1000.6 V1004.6 L86.9 1010 A1.7 1.7 0 0 0 90.1 1010.9 L92.4 1005.2 L93.7 1008.6 M95.2 997.6 L99.2 995.9 A1.7 1.7 0 0 1 100.4 999 L96.4 1000.4" stroke="#444" stroke-width="1.3" stroke-linejoin="round"/><path d="M94.6 1002.3 L103.6 1011.5 M103.6 1002.3 L94.6 1011.5" stroke="#444" stroke-width="1.4"/><rect x="1185.3" y="992.4" width="17.8" height="17.6" stroke="#444" stroke-width="1.6"/><path d="M1191.3 992.4 V1010 M1197.2 992.4 V1010 M1185.3 998.3 H1203.1 M1185.3 1004.2 H1203.1" stroke="#444" stroke-width="1.5"/><rect x="1245" y="992.2" width="19.8" height="17.8" stroke="#444" stroke-width="1.6"/><rect x="1249.9" y="995.3" width="10.4" height="11.8" stroke="#444" stroke-width="1.3"/><path d="M1252 998.4 H1258.2 M1252 1001.3 H1258.2 M1252 1004.2 H1258.2" stroke="#444" stroke-width="1.2"/><rect x="1305.1" y="992.2" width="19.8" height="17.8" stroke="#444" stroke-width="1.6"/><path d="M1305.1 1002.5 H1317.4 V992.2 M1311.7 992.2 V1002.5" stroke="#444" stroke-width="1.4"/><path d="M1353 1001.6 H1364.4 M1528.8 1001.6 H1540.3 M1534.55 995.9 V1007.2" stroke="#555" stroke-width="1.2"/><rect x="1373" y="1001" width="147.6" height="2.2" fill="#444"/><rect x="1446.4" y="997.8" width="2" height="8" fill="#444"/><rect x="1460" y="993.2" width="8.2" height="16.6" fill="#6e6e6e"/></svg>
</body></html>
